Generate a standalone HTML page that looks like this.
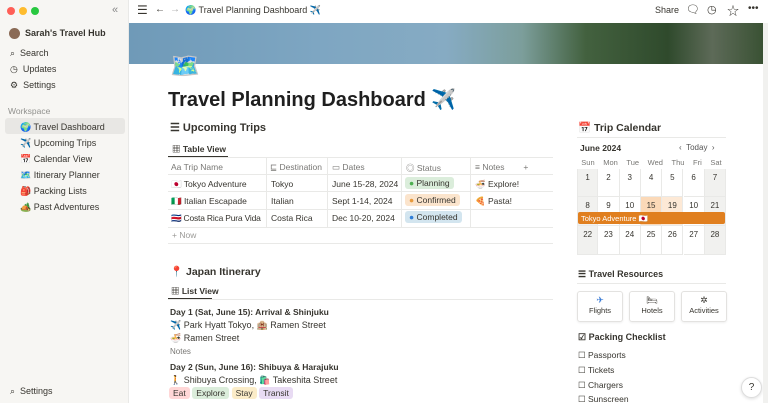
<!DOCTYPE html>
<html><head><meta charset="utf-8"><style>
*{box-sizing:border-box;margin:0;padding:0}
body{width:768px;height:403px;overflow:hidden;font-family:"Liberation Sans","Noto Sans CJK JP",sans-serif;color:#37352f;background:#fff;position:relative;font-size:9px}
.a{position:absolute;white-space:nowrap}
#sb{position:absolute;left:0;top:0;width:129px;height:403px;background:#f7f6f3;border-right:1px solid #e9e9e7}
.dot{position:absolute;top:7px;width:8px;height:8px;border-radius:50%}
.si{position:absolute;left:10px;font-size:9px;color:#37352f}
.ws{position:absolute;left:20px;font-size:9px}
.cell{position:absolute;border-right:1px solid #e9e9e7;border-bottom:1px solid #e9e9e7}
.pill{display:inline-block;padding:1px 4px;border-radius:3px;font-size:8.5px}
.b{font-weight:bold}
.t{font-size:8.5px}
</style></head><body>
<div id="sb">
<div class="dot" style="left:7px;background:#ff5f57"></div>
<div class="dot" style="left:19px;background:#febc2e"></div>
<div class="dot" style="left:31px;background:#28c840"></div>
<div class="a" style="left:112px;top:4px;color:#888;font-size:11px">«</div>
<div class="a" style="left:9px;top:28px;width:11px;height:11px;border-radius:50%;background:#8a6a55"></div>
<div class="a b" style="left:25px;top:28px;font-size:9px">Sarah's Travel Hub</div>
<div class="si" style="top:48px">⌕&nbsp; Search</div>
<div class="si" style="top:64px">◷&nbsp; Updates</div>
<div class="si" style="top:80px">⚙&nbsp; Settings</div>
<div class="a" style="left:8px;top:106px;color:#91918e;font-size:8.5px">Workspace</div>
<div class="a" style="left:5px;top:118px;width:120px;height:16px;background:#e8e7e4;border-radius:3px"></div>
<div class="ws" style="top:122px">🌍 Travel Dashboard</div>
<div class="ws" style="top:138px">✈️ Upcoming Trips</div>
<div class="ws" style="top:154px">📅 Calendar View</div>
<div class="ws" style="top:170px">🗺️ Itinerary Planner</div>
<div class="ws" style="top:186px">🎒 Packing Lists</div>
<div class="ws" style="top:202px">🏕️ Past Adventures</div>
<div class="si" style="top:386px">⌕&nbsp; Settings</div>
</div>
<div class="a" style="left:137px;top:3px;font-size:12px">☰</div>
<div class="a" style="left:155px;top:4px;font-size:10px">←</div>
<div class="a" style="left:170px;top:4px;font-size:10px;color:#aaa">→</div>
<div class="a" style="left:185px;top:5px;font-size:9px">🌍 Travel Planning Dashboard ✈️</div>
<div class="a" style="left:655px;top:5px;font-size:9px">Share</div>
<div class="a" style="left:686px;top:3px;font-size:11px">🗨</div>
<div class="a" style="left:707px;top:3px;font-size:11px">◷</div>
<div class="a" style="left:727px;top:2px;font-size:12px">☆</div>
<div class="a" style="left:748px;top:3px;font-size:10px">•••</div>
<div class="a" style="left:129px;top:23px;width:634px;height:41px;background:linear-gradient(90deg,#6f9ab8 0%,#7ea6c2 30%,#86abc3 50%,#7c9e9b 62%,#43613f 72%,#2f4a2c 85%,#5d6a58 92%,#3a5234 100%)"></div>
<div class="a" style="left:170px;top:52px;font-size:24px">🗺️</div>
<div class="a b" style="left:168px;top:87px;font-size:20px;color:#1f1f1f">Travel Planning Dashboard ✈️</div>
<div class="a b" style="left:170px;top:121px;font-size:11px">☰ Upcoming Trips</div>
<div class="a b" style="left:172px;top:143px;font-size:8.5px">▦ Table View</div>
<div class="a" style="left:168px;top:156px;width:60px;height:2px;background:#37352f"></div>
<div class="a" style="left:168px;top:157px;width:385px;height:1px;background:#e9e9e7"></div>
<div class="a" style="left:168px;top:227px;width:385px;height:1px;background:#e9e9e7"></div>
<div class="a" style="left:168px;top:243px;width:385px;height:1px;background:#e9e9e7"></div>
<div class="a" style="left:168px;top:174px;width:385px;height:1px;background:#e9e9e7"></div>
<div class="a" style="left:168px;top:191px;width:385px;height:1px;background:#e9e9e7"></div>
<div class="a" style="left:168px;top:209px;width:385px;height:1px;background:#e9e9e7"></div>
<div class="a" style="left:266px;top:157px;width:1px;height:70px;background:#e9e9e7"></div>
<div class="a" style="left:327px;top:157px;width:1px;height:70px;background:#e9e9e7"></div>
<div class="a" style="left:401px;top:157px;width:1px;height:70px;background:#e9e9e7"></div>
<div class="a" style="left:470px;top:157px;width:1px;height:70px;background:#e9e9e7"></div>
<div class="a t" style="left:171px;top:162px;color:#787774">Aa Trip Name</div>
<div class="a t" style="left:270px;top:162px;color:#787774">⊑ Destination</div>
<div class="a t" style="left:332px;top:162px;color:#787774">▭ Dates</div>
<div class="a t" style="left:406px;top:162px;color:#787774">◎ Status</div>
<div class="a t" style="left:475px;top:162px;color:#787774">≡ Notes &nbsp;&nbsp;&nbsp;&nbsp;&nbsp;&nbsp; +</div>
<div class="a t" style="left:171px;top:179px">🇯🇵 Tokyo Adventure</div>
<div class="a t" style="left:271px;top:179px">Tokyo</div>
<div class="a t" style="left:332px;top:179px">June 15-28, 2024</div>
<div class="a" style="left:405px;top:177px"><span class="pill" style="background:#dbeddb"><span style="color:#4caf50">●</span> Planning</span></div>
<div class="a t" style="left:475px;top:179px">🍜 Explore!</div>
<div class="a t" style="left:171px;top:196px">🇮🇹 Italian Escapade</div>
<div class="a t" style="left:271px;top:196px">Italian</div>
<div class="a t" style="left:332px;top:196px">Sept 1-14, 2024</div>
<div class="a" style="left:405px;top:194px"><span class="pill" style="background:#fbe4cc"><span style="color:#e89a3c">●</span> Confirmed</span></div>
<div class="a t" style="left:475px;top:196px">🍕 Pasta!</div>
<div class="a t" style="left:171px;top:213px;letter-spacing:-0.2px">🇨🇷 Costa Rica Pura Vida</div>
<div class="a t" style="left:271px;top:213px">Costa Rica</div>
<div class="a t" style="left:332px;top:213px">Dec 10-20, 2024</div>
<div class="a" style="left:405px;top:211px"><span class="pill" style="background:#d3e5ef"><span style="color:#2f7ed8">●</span> Completed</span></div>
<div class="a t" style="left:172px;top:230px;color:#9b9a97">+ Now</div>
<div class="a b" style="left:170px;top:265px;font-size:10.5px">📍 Japan Itinerary</div>
<div class="a b" style="left:171px;top:285px;font-size:8.5px">▦ List View</div>
<div class="a" style="left:168px;top:298px;width:44px;height:2px;background:#37352f"></div>
<div class="a" style="left:168px;top:299px;width:385px;height:1px;background:#e9e9e7"></div>
<div class="a b" style="left:170px;top:307px;font-size:8.5px">Day 1 (Sat, June 15): Arrival &amp; Shinjuku</div>
<div class="a" style="left:170px;top:320px">✈️ Park Hyatt Tokyo, 🏨 Ramen Street</div>
<div class="a" style="left:170px;top:333px">🍜 Ramen Street</div>
<div class="a" style="left:170px;top:347px;color:#787774;font-size:8px">Notes</div>
<div class="a b" style="left:170px;top:362px;font-size:8.5px">Day 2 (Sun, June 16): Shibuya &amp; Harajuku</div>
<div class="a" style="left:170px;top:375px">🚶 Shibuya Crossing, 🛍️ Takeshita Street</div>
<div class="a" style="left:169px;top:387px"><span class="pill" style="background:#ffd7d7">Eat</span> <span class="pill" style="background:#dbeddb">Explore</span> <span class="pill" style="background:#fbecc8">Stay</span> <span class="pill" style="background:#e8dbf3">Transit</span></div>
<div class="a b" style="left:578px;top:121px;font-size:10.5px">📅 Trip Calendar</div>
<div class="a" style="left:577px;top:137px;width:149px;height:1px;background:#e9e9e7"></div>
<div class="a b" style="left:580px;top:143px;font-size:8.5px">June 2024</div>
<div class="a" style="left:679px;top:143px;font-size:8px;color:#555">‹ &nbsp;Today&nbsp; ›</div>
<div class="a" style="left:577px;top:158px;width:149px;font-size:7.5px;color:#787774;display:flex;justify-content:space-around"><span>Sun</span><span>Mon</span><span>Tue</span><span>Wed</span><span>Thu</span><span>Fri</span><span>Sat</span></div>
<div class="a" id="cal" style="left:577px;top:169px;width:149px;height:86px"></div>
<div class="a" style="left:578px;top:212px;width:147px;height:12px;background:#e07f1f;border-radius:2px;color:#fff;font-size:7.5px;padding:2px 3px">Tokyo Adventure 🇯🇵</div>
<div class="a b" style="left:578px;top:269px;font-size:9px">☰ Travel Resources</div>
<div class="a" style="left:577px;top:283px;width:149px;height:1px;background:#e9e9e7"></div>
<div class="a" style="left:577px;top:291px;width:46px;height:31px;border:1px solid #e3e2e0;border-radius:3px;box-shadow:0 1px 2px #0001;text-align:center;font-size:7.5px;padding-top:3px"><span style="color:#3a7bd5;font-size:9px">✈</span><br>Flights</div>
<div class="a" style="left:629px;top:291px;width:46px;height:31px;border:1px solid #e3e2e0;border-radius:3px;box-shadow:0 1px 2px #0001;text-align:center;font-size:7.5px;padding-top:3px"><span style="font-size:9px">🛏</span><br>Hotels</div>
<div class="a" style="left:681px;top:291px;width:46px;height:31px;border:1px solid #e3e2e0;border-radius:3px;box-shadow:0 1px 2px #0001;text-align:center;font-size:7.5px;padding-top:3px"><span style="font-size:9px">✲</span><br>Activities</div>
<div class="a b" style="left:578px;top:332px;font-size:9px">☑ Packing Checklist</div>
<div class="a" style="left:578px;top:350px;font-size:8.5px">☐ Passports</div>
<div class="a" style="left:578px;top:365px;font-size:8.5px">☐ Tickets</div>
<div class="a" style="left:578px;top:380px;font-size:8.5px">☐ Chargers</div>
<div class="a" style="left:578px;top:394px;font-size:8.5px">☐ Sunscreen</div>
<div class="a" style="left:741px;top:377px;width:21px;height:21px;border-radius:50%;border:1px solid #ddd;background:#fff;text-align:center;font-size:10px;line-height:19px;box-shadow:0 1px 3px #0002">?</div>
<div class="a" style="left:763px;top:23px;width:5px;height:380px;background:#f1f1ef"></div>
<script>
var c=document.getElementById('cal'),h='';
var rows=[[1,2,3,4,5,6,7],[8,9,10,15,19,10,21],[22,23,24,25,26,27,28]];
var tops=[0,28,57],hs=[28,29,29];
for(var r=0;r<3;r++)for(var i=0;i<7;i++){
 var bg=(i==0||i==6)?'#f1f1ef':'#fff';
 if(r==1&&i==3)bg='#fbd9b8';if(r==1&&i==4)bg='#fde9d6';
 h+='<div class="cell" style="left:'+(i*21.3)+'px;top:'+tops[r]+'px;width:21.3px;height:'+hs[r]+'px;background:'+bg+';font-size:8px;text-align:center;padding-top:4px;border-left:'+(i==0?'1px solid #e9e9e7':'0')+'">'+rows[r][i]+'</div>';}
c.innerHTML=h;
</script>
</body></html>
